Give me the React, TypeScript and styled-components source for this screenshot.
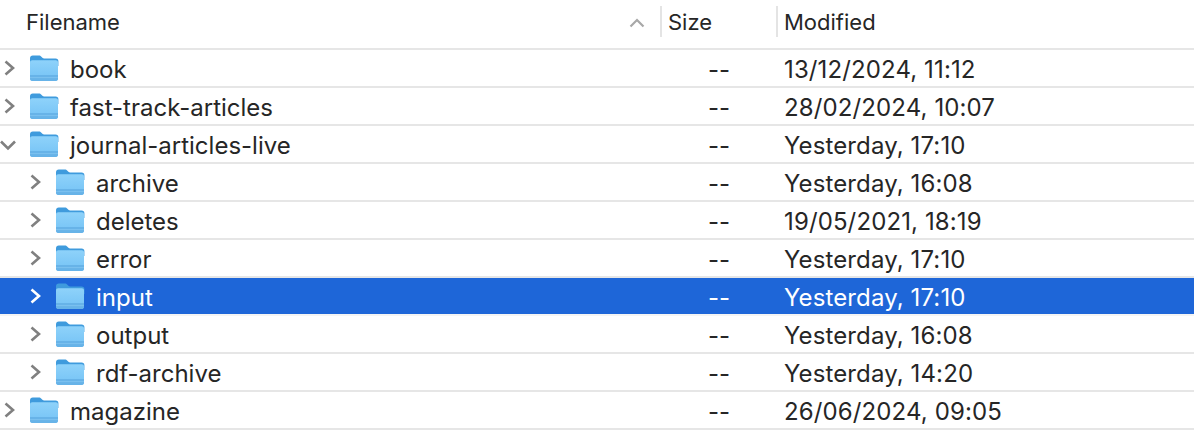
import React from 'react';
import styled, { createGlobalStyle } from 'styled-components';

const rows = [
  { id: 1, name: 'book', date: '13/12/2024, 11:12', depth: 0 },
  { id: 2, name: 'fast-track-articles', date: '28/02/2024, 10:07', depth: 0 },
  { id: 3, name: 'journal-articles-live', date: 'Yesterday, 17:10', depth: 0, open: true },
  { id: 4, name: 'archive', date: 'Yesterday, 16:08', depth: 1 },
  { id: 5, name: 'deletes', date: '19/05/2021, 18:19', depth: 1 },
  { id: 6, name: 'error', date: 'Yesterday, 17:10', depth: 1 },
  { id: 7, name: 'input', date: 'Yesterday, 17:10', depth: 1, selected: true },
  { id: 8, name: 'output', date: 'Yesterday, 16:08', depth: 1 },
  { id: 9, name: 'rdf-archive', date: 'Yesterday, 14:20', depth: 1 },
  { id: 10, name: 'magazine', date: '26/06/2024, 09:05', depth: 0 },
];

const Chevron: React.FC<{ open?: boolean; selected?: boolean }> = ({ open, selected }) => (
  <ChevronIcon viewBox="0 0 14 16" $selected={selected}>
    <path d={open ? 'M-2 5.500L5 12.500L12 5.500' : 'M2.500 1.500L10 8L2.500 14.500'} />
  </ChevronIcon>
);

const Folder: React.FC<{ uid: number }> = ({ uid }) => (
  <FolderIcon viewBox="0 0 30 28">
    <defs>
      <linearGradient id={`body-${uid}`} x1="0" y1="0" x2="0" y2="1">
        <stop offset="0" stopColor="#8ed2fa" />
        <stop offset="1" stopColor="#74c2f5" />
      </linearGradient>
    </defs>
    <path
      d="M1 4.500C1 2.600 2 1.500 3.800 1.500h6c1.200 0 1.800.4 2.600 1.200l1 1.100c.5.500 1 .7 1.800.7h11.400c1.800 0 2.800 1 2.800 2.800V12H1z"
      fill="#3f9bdd"
    />
    <path
      d="M1 8.500c0-1.400.9-2.200 2.200-2.200h23.600c1.300 0 2.200.8 2.200 2.200v16c0 1.500-.9 2.500-2.400 2.500H3.400C1.900 27 1 26 1 24.500z"
      fill={`url(#body-${uid})`}
    />
    <path d="M1 21h28v3.500c0 1.500-.9 2.500-2.400 2.500H3.400C1.900 27 1 26 1 24.500z" fill="#67b3e8" />
    <path d="M1 23.600h28" stroke="#82c4f0" strokeWidth="0.800" />
  </FolderIcon>
);

const App: React.FC = () => {
  return (
    <>
      <GlobalStyle />
      <Table>
        <Header>
          <HeaderCell $width={660} $pad={26}>
            Filename
            <SortIcon viewBox="0 0 16 10">
              <path d="M1.500 8.500L8 2l6.500 6.500" />
            </SortIcon>
          </HeaderCell>
          <HeaderCell $width={116} $pad={8} $divider>
            Size
          </HeaderCell>
          <HeaderCell $width={418} $pad={8} $divider>
            Modified
          </HeaderCell>
        </Header>
        {rows.map(({ id, name, date, depth, open, selected }) => (
          <Row key={id} $selected={selected}>
            <NameCell $depth={depth}>
              <Chevron open={open} selected={selected} />
              <Folder uid={id} />
              <span>{name}</span>
            </NameCell>
            <SizeCell>--</SizeCell>
            <DateCell>{date}</DateCell>
          </Row>
        ))}
      </Table>
    </>
  );
};

const GlobalStyle = createGlobalStyle`
  html, body {
    margin: 0;
    background: #fff;
    overflow: hidden;
  }
`;

const Table = styled.div`
  width: 1194px;
  height: 434px;
  overflow: hidden;
  font-family: Inter, "Liberation Sans", sans-serif;
  color: #262626;
`;

const Header = styled.div`
  display: flex;
  height: 48px;
  border-bottom: 2px solid #e6e6e6;
  box-sizing: content-box;
`;

const HeaderCell = styled.div<{ $width: number; $pad: number; $divider?: boolean }>`
  position: relative;
  flex: 0 0 ${({ $width }) => $width}px;
  box-sizing: border-box;
  display: flex;
  align-items: center;
  padding-left: ${({ $pad }) => $pad}px;
  padding-bottom: 5px;
  font-size: 22px;
  ${({ $divider }) =>
    $divider &&
    `
    &::before {
      content: '';
      position: absolute;
      left: 0;
      top: 6px;
      bottom: 11px;
      width: 2px;
      background: #e4e4e4;
    }
  `}
`;

const SortIcon = styled.svg`
  position: absolute;
  left: 629px;
  top: 18px;
  width: 16px;
  height: 10px;
  fill: none;
  stroke: #a8a8a8;
  stroke-width: 2.2;
`;

const Row = styled.div<{ $selected?: boolean }>`
  display: flex;
  align-items: center;
  height: 36px;
  border-bottom: 2px solid ${({ $selected }) => ($selected ? '#f4f4f4' : '#e6e6e6')};
  background: ${({ $selected }) => ($selected ? '#1e66d8' : '#fff')};
  color: ${({ $selected }) => ($selected ? '#fff' : '#262626')};
  font-size: 24px;
  line-height: 30px;
`;

const NameCell = styled.div<{ $depth: number }>`
  flex: 0 0 661px;
  box-sizing: border-box;
  display: flex;
  align-items: center;
  padding-left: ${({ $depth }) => 3 + $depth * 26}px;
  span {
    margin-left: 11px;
    padding-top: 3px;
  }
`;

const ChevronIcon = styled.svg<{ $selected?: boolean }>`
  width: 14px;
  height: 16px;
  margin-right: 12px;
  overflow: visible;
  fill: none;
  stroke: ${({ $selected }) => ($selected ? '#fff' : '#808080')};
  stroke-width: 2.6;
`;

const FolderIcon = styled.svg`
  width: 30px;
  height: 28px;
`;

const SizeCell = styled.div`
  flex: 0 0 123px;
  box-sizing: border-box;
  padding-left: 47px;
  padding-top: 3px;
`;

const DateCell = styled.div`
  flex: 1;
  padding-top: 3px;
  letter-spacing: 0.12px;
`;

export default App;
